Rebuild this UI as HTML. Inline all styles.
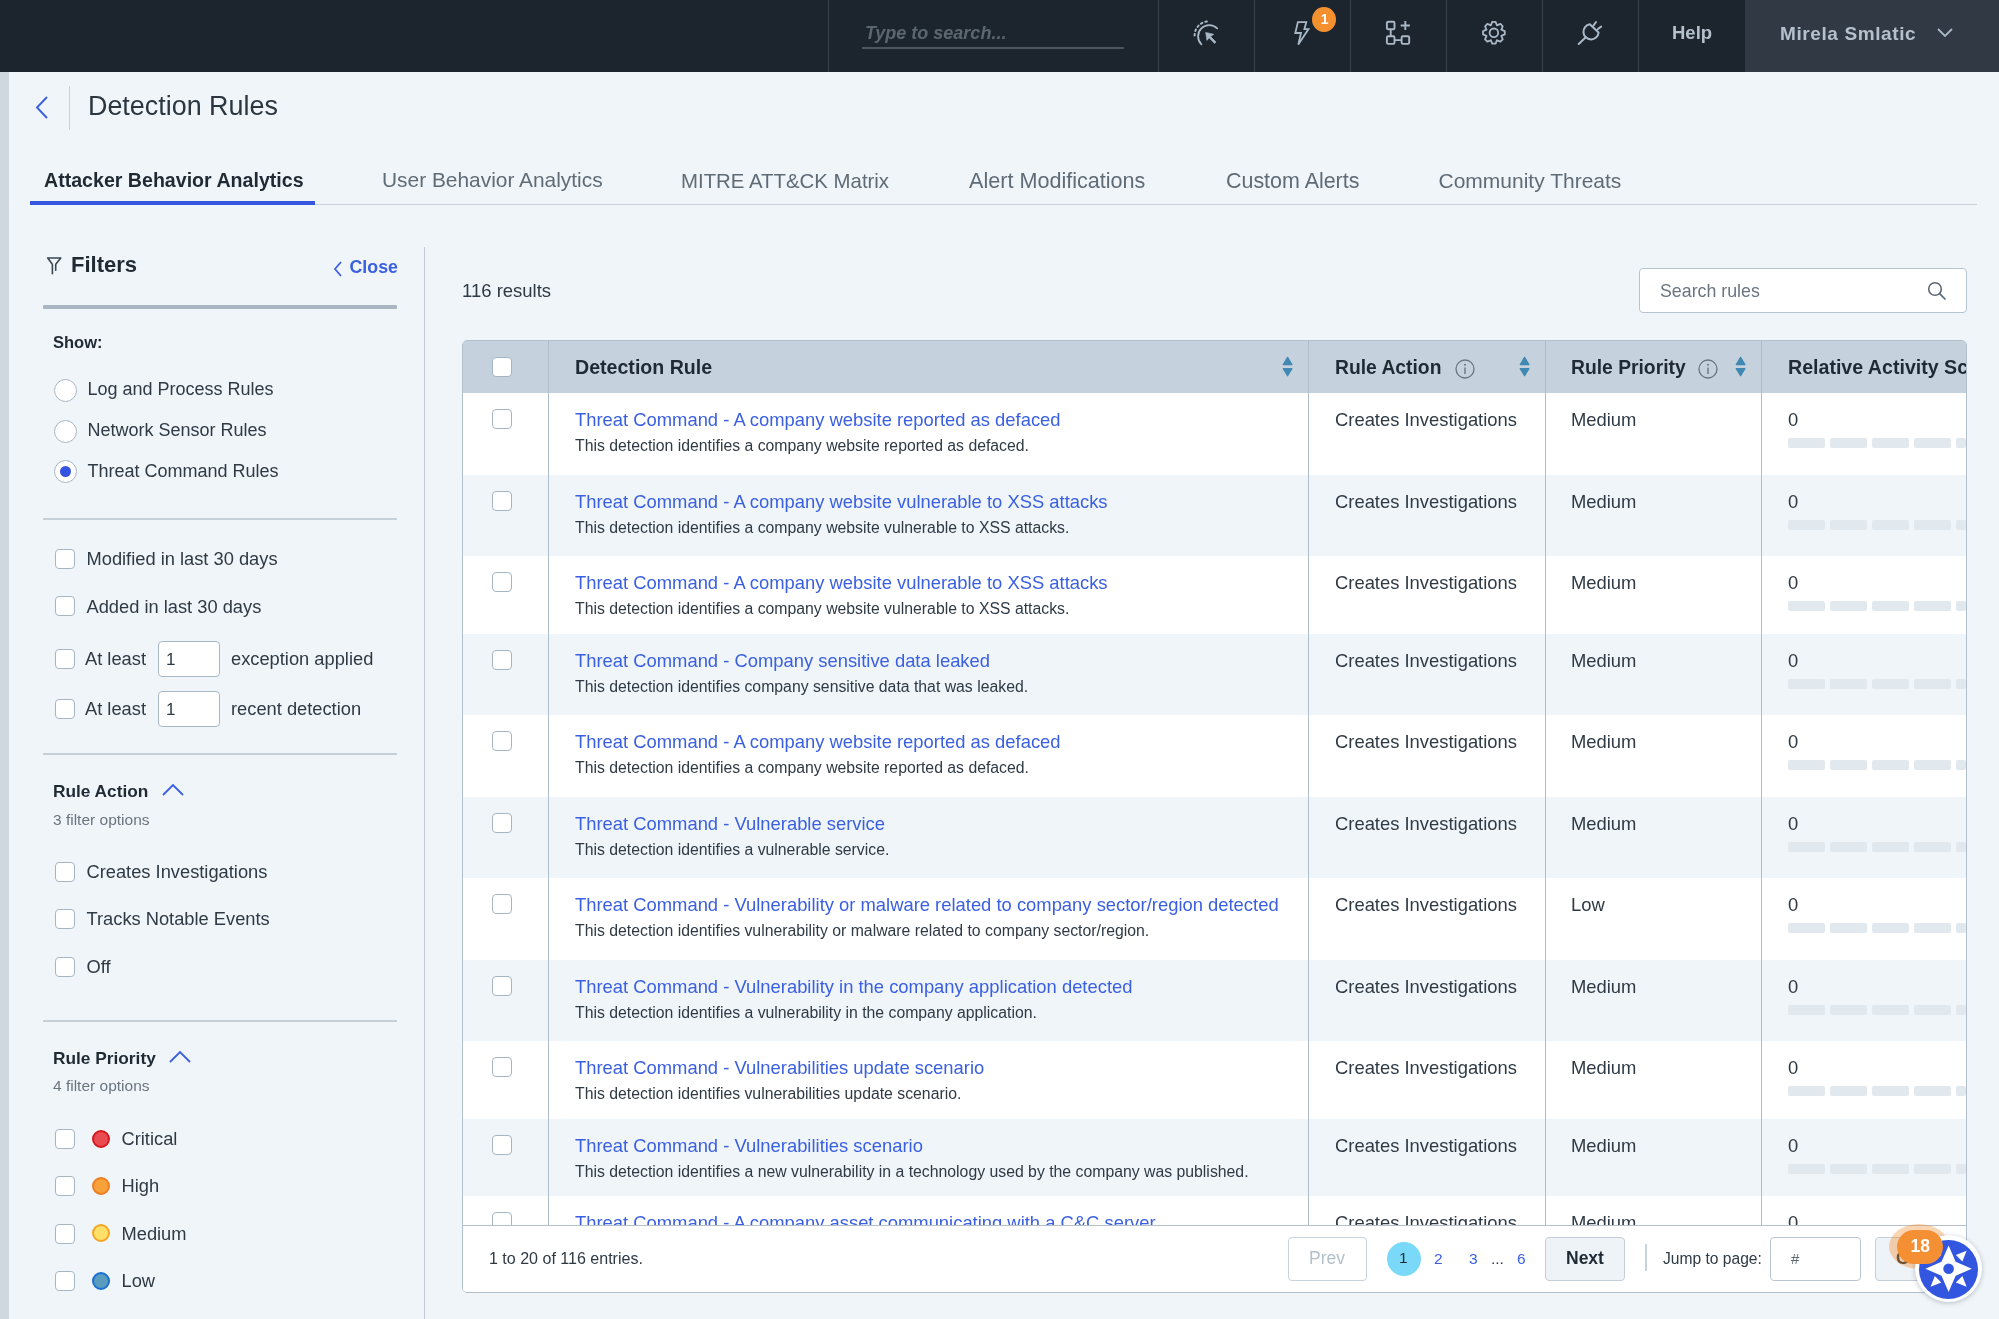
<!DOCTYPE html>
<html><head><meta charset="utf-8"><style>
html,body{margin:0;padding:0;width:1999px;height:1319px;overflow:hidden;background:#f0f5f9;font-family:"Liberation Sans", sans-serif;position:relative}
.t{position:absolute;white-space:nowrap;line-height:1}
#root{position:absolute;left:0;top:0;width:1999px;height:1319px;will-change:transform}
</style></head><body><div id="root">
<div style="position:absolute;left:0px;top:0px;width:1999px;height:72px;background:#1c252e"></div>
<div style="position:absolute;left:828px;top:0px;width:1px;height:72px;background:#37414b"></div>
<div style="position:absolute;left:1158px;top:0px;width:1px;height:72px;background:#37414b"></div>
<div style="position:absolute;left:1254px;top:0px;width:1px;height:72px;background:#37414b"></div>
<div style="position:absolute;left:1350px;top:0px;width:1px;height:72px;background:#37414b"></div>
<div style="position:absolute;left:1446px;top:0px;width:1px;height:72px;background:#37414b"></div>
<div style="position:absolute;left:1542px;top:0px;width:1px;height:72px;background:#37414b"></div>
<div style="position:absolute;left:1638px;top:0px;width:1px;height:72px;background:#37414b"></div>
<div style="position:absolute;left:1745px;top:0px;width:254px;height:72px;background:#313a44"></div>
<div class="t" style="left:865px;top:24.26px;font-size:18px;color:#5b6670;font-weight:700;font-style:italic;">Type to search...</div>
<div style="position:absolute;left:862px;top:47px;width:262px;height:2px;background:#4a5560"></div>
<div class="t" style="left:1672px;top:24.14px;font-size:18.5px;color:#b4c0cc;font-weight:700;">Help</div>
<div class="t" style="left:1780px;top:23.72px;font-size:19px;color:#b4c0cc;font-weight:700;letter-spacing:0.6px;">Mirela Smlatic</div>
<svg style="position:absolute;left:1936px;top:27px" width="18" height="12" viewBox="0 0 18 12"><path d="M2 2 L9 9 L16 2" fill="none" stroke="#a9b8c6" stroke-width="1.8"/></svg><svg style="position:absolute;left:1185px;top:14px" width="40" height="36" viewBox="0 0 40 36">
<path d="M16.4 30.3 A10.6 10.6 0 1 1 32.2 14.4" fill="none" stroke="#a9b8c6" stroke-width="1.8" stroke-linecap="round"/>
<path d="M9.6 21.5 A14.2 14.2 0 0 1 23.8 7.3" fill="none" stroke="#a9b8c6" stroke-width="2" stroke-linecap="round" stroke-dasharray="1.6 3.05"/>
<path d="M20.7 18.4 L28.8 20.3 L25.6 22.6 L31 28 L29.6 29.4 L24.2 24 L21.9 26.4 Z" fill="#a9b8c6" stroke="#a9b8c6" stroke-width="0.6" stroke-linejoin="round"/>
</svg><svg style="position:absolute;left:1285px;top:14px" width="30" height="36" viewBox="1285 14 30 36">
<path d="M1297.9 22.1 L1306.3 22.1 L1304.4 29.1 L1308.5 29.1 L1298.3 44.6 L1301 33 L1295.3 33 Z" fill="none" stroke="#a9b8c6" stroke-width="1.8" stroke-linejoin="miter"/>
</svg><div style="position:absolute;left:1312.3px;top:6.6px;width:24px;height:25.7px;background:#f5902f;border-radius:50%"></div>
<div class="t" style="left:1320.8px;top:12.35px;font-size:14px;color:#ffffff;font-weight:700;">1</div>
<svg style="position:absolute;left:1378px;top:14px" width="40" height="36" viewBox="0 0 40 36">
<rect x="8.9" y="7.7" width="7.6" height="7.6" rx="1.3" fill="none" stroke="#a9b8c6" stroke-width="1.9"/>
<rect x="8.9" y="22.3" width="7.6" height="7.6" rx="1.3" fill="none" stroke="#a9b8c6" stroke-width="1.9"/>
<rect x="23.6" y="22.3" width="7.6" height="7.6" rx="1.3" fill="none" stroke="#a9b8c6" stroke-width="1.9"/>
<path d="M12.7 15.3 V22.3 M16.5 26.1 H23.6 M27.3 7 V16.1 M22.7 11.5 H31.9" fill="none" stroke="#a9b8c6" stroke-width="1.9"/>
</svg><svg style="position:absolute;left:1474px;top:14px" width="40" height="36" viewBox="0 0 40 36">
<path d="M18.26 7.92 L21.54 7.92 L23.02 11.43 L22.91 11.39 L26.43 9.95 L28.75 12.27 L27.31 15.79 L27.27 15.68 L30.78 17.16 L30.78 20.44 L27.27 21.92 L27.31 21.81 L28.75 25.33 L26.43 27.65 L22.91 26.21 L23.02 26.17 L21.54 29.68 L18.26 29.68 L16.78 26.17 L16.89 26.21 L13.37 27.65 L11.05 25.33 L12.49 21.81 L12.53 21.92 L9.02 20.44 L9.02 17.16 L12.53 15.68 L12.49 15.79 L11.05 12.27 L13.37 9.95 L16.89 11.39 L16.78 11.43 Z" fill="none" stroke="#a9b8c6" stroke-width="1.8" stroke-linejoin="round"/>
<circle cx="19.9" cy="18.8" r="4.3" fill="none" stroke="#a9b8c6" stroke-width="1.8"/>
</svg><svg style="position:absolute;left:1570px;top:14px" width="40" height="36" viewBox="0 0 40 36">
<path d="M8.7 30 L15.8 23.2" fill="none" stroke="#a9b8c6" stroke-width="2" stroke-linecap="round"/>
<path d="M19.8 10.3 A7.6 7.6 0 1 0 28.6 18.6 Z" fill="none" stroke="#a9b8c6" stroke-width="2" stroke-linejoin="round"/>
<path d="M23.4 11.6 L26 8 M27.6 15.3 L31.1 12.6" fill="none" stroke="#a9b8c6" stroke-width="2" stroke-linecap="round"/>
</svg><div style="position:absolute;left:0px;top:72px;width:9px;height:1247px;background:#d0d8df"></div>
<svg style="position:absolute;left:34px;top:95px" width="16" height="26" viewBox="0 0 16 26"><path d="M13 2 L3 12.5 L13 23" fill="none" stroke="#3a5fe0" stroke-width="1.9"/></svg><div style="position:absolute;left:68.5px;top:86px;width:1px;height:44px;background:#c9d2da"></div>
<div class="t" style="left:88px;top:93.03px;font-size:26.9px;color:#2b3640;font-weight:400;">Detection Rules</div>
<div class="t" style="left:44px;top:171.41px;font-size:19.6px;color:#1f2a34;font-weight:700;">Attacker Behavior Analytics</div>
<div class="t" style="left:382px;top:170.31px;font-size:20.9px;color:#5f6b76;font-weight:400;">User Behavior Analytics</div>
<div class="t" style="left:681px;top:170.73px;font-size:20.4px;color:#5f6b76;font-weight:400;">MITRE ATT&amp;CK Matrix</div>
<div class="t" style="left:969px;top:169.72px;font-size:21.6px;color:#5f6b76;font-weight:400;">Alert Modifications</div>
<div class="t" style="left:1226px;top:170.84px;font-size:21.45px;color:#5f6b76;font-weight:400;">Custom Alerts</div>
<div class="t" style="left:1438.5px;top:170.22px;font-size:21.0px;color:#5f6b76;font-weight:400;">Community Threats</div>
<div style="position:absolute;left:30px;top:204px;width:1947px;height:1px;background:#c8d1da"></div>
<div style="position:absolute;left:30px;top:201px;width:285px;height:4px;background:#3557e0"></div>
<div style="position:absolute;left:424px;top:247px;width:1px;height:1072px;background:#c3ccd5"></div>
<svg style="position:absolute;left:40px;top:250px" width="30" height="30" viewBox="0 0 30 30"><path d="M12.4 23.7 V15 Q12.4 14.3 12 13.8 L7.7 8 H20.8 L16.1 13.8 Q15.7 14.3 15.7 15 V20.2" fill="none" stroke="#3a4652" stroke-width="1.6" stroke-linecap="round" stroke-linejoin="round"/></svg><div class="t" style="left:71px;top:254.38px;font-size:22px;color:#1f2a34;font-weight:700;">Filters</div>
<svg style="position:absolute;left:330.5px;top:258.5px" width="14" height="20" viewBox="0 0 14 20"><path d="M10 3 L4 10 L10 17" fill="none" stroke="#3a5fe0" stroke-width="1.7"/></svg><div class="t" style="left:349.5px;top:258.53px;font-size:17.8px;color:#3a5fe0;font-weight:700;">Close</div>
<div style="position:absolute;left:43px;top:305px;width:354px;height:4px;background:#a9b6c1;border-radius:1px"></div>
<div class="t" style="left:53px;top:334.03px;font-size:16.5px;color:#1f2a34;font-weight:700;">Show:</div>
<div style="position:absolute;left:54.0px;top:379.0px;width:23px;height:23px;box-sizing:border-box;border:1.3px solid #a7b5c2;border-radius:50%;background:#fff"></div>
<div class="t" style="left:87.5px;top:380.36px;font-size:18px;color:#2f3a45;font-weight:400;">Log and Process Rules</div>
<div style="position:absolute;left:54.0px;top:419.5px;width:23px;height:23px;box-sizing:border-box;border:1.3px solid #a7b5c2;border-radius:50%;background:#fff"></div>
<div class="t" style="left:87.5px;top:421.06px;font-size:18px;color:#2f3a45;font-weight:400;">Network Sensor Rules</div>
<div style="position:absolute;left:54.0px;top:460.0px;width:23px;height:23px;box-sizing:border-box;border:1.3px solid #a7b5c2;border-radius:50%;background:#fff"></div>
<div style="position:absolute;left:60.0px;top:466.0px;width:11px;height:11px;border-radius:50%;background:#3555e0"></div>
<div class="t" style="left:87.5px;top:461.66px;font-size:18px;color:#2f3a45;font-weight:400;">Threat Command Rules</div>
<div style="position:absolute;left:43px;top:518px;width:354px;height:1.5px;background:#c6d0d9"></div>
<div style="position:absolute;left:55px;top:549px;width:20px;height:20px;box-sizing:border-box;border:1.5px solid #a6b5c3;border-radius:4px;background:#fff"></div>
<div class="t" style="left:86.5px;top:550.11px;font-size:18.3px;color:#2f3a45;font-weight:400;">Modified in last 30 days</div>
<div style="position:absolute;left:55px;top:596px;width:20px;height:20px;box-sizing:border-box;border:1.5px solid #a6b5c3;border-radius:4px;background:#fff"></div>
<div class="t" style="left:86.5px;top:597.51px;font-size:18.3px;color:#2f3a45;font-weight:400;">Added in last 30 days</div>
<div style="position:absolute;left:55px;top:649px;width:20px;height:20px;box-sizing:border-box;border:1.5px solid #a6b5c3;border-radius:4px;background:#fff"></div>
<div class="t" style="left:85px;top:649.71px;font-size:18.3px;color:#2f3a45;font-weight:400;">At least</div>
<div style="position:absolute;left:158px;top:641px;width:62px;height:36px;box-sizing:border-box;border:1.3px solid #a9b7c4;border-radius:4px;background:#fff"></div>
<div class="t" style="left:166px;top:650.81px;font-size:17px;color:#2f3a45;font-weight:400;">1</div>
<div class="t" style="left:231px;top:649.71px;font-size:18.3px;color:#2f3a45;font-weight:400;">exception applied</div>
<div style="position:absolute;left:55px;top:699px;width:20px;height:20px;box-sizing:border-box;border:1.5px solid #a6b5c3;border-radius:4px;background:#fff"></div>
<div class="t" style="left:85px;top:699.51px;font-size:18.3px;color:#2f3a45;font-weight:400;">At least</div>
<div style="position:absolute;left:158px;top:691px;width:62px;height:36px;box-sizing:border-box;border:1.3px solid #a9b7c4;border-radius:4px;background:#fff"></div>
<div class="t" style="left:166px;top:700.61px;font-size:17px;color:#2f3a45;font-weight:400;">1</div>
<div class="t" style="left:231px;top:699.51px;font-size:18.3px;color:#2f3a45;font-weight:400;">recent detection</div>
<div style="position:absolute;left:43px;top:753px;width:354px;height:1.5px;background:#c6d0d9"></div>
<div class="t" style="left:53px;top:782.76px;font-size:17.3px;color:#1f2a34;font-weight:700;">Rule Action</div>
<svg style="position:absolute;left:161px;top:783px" width="24" height="14" viewBox="0 0 24 14"><path d="M2 12 L12 2 L22 12" fill="none" stroke="#3a5fe0" stroke-width="1.8"/></svg><div class="t" style="left:53px;top:811.88px;font-size:15.5px;color:#6b7580;font-weight:400;">3 filter options</div>
<div style="position:absolute;left:55px;top:862px;width:20px;height:20px;box-sizing:border-box;border:1.5px solid #a6b5c3;border-radius:4px;background:#fff"></div>
<div class="t" style="left:86.5px;top:862.81px;font-size:18.3px;color:#2f3a45;font-weight:400;">Creates Investigations</div>
<div style="position:absolute;left:55px;top:909px;width:20px;height:20px;box-sizing:border-box;border:1.5px solid #a6b5c3;border-radius:4px;background:#fff"></div>
<div class="t" style="left:86.5px;top:910.31px;font-size:18.3px;color:#2f3a45;font-weight:400;">Tracks Notable Events</div>
<div style="position:absolute;left:55px;top:957px;width:20px;height:20px;box-sizing:border-box;border:1.5px solid #a6b5c3;border-radius:4px;background:#fff"></div>
<div class="t" style="left:86.5px;top:957.81px;font-size:18.3px;color:#2f3a45;font-weight:400;">Off</div>
<div style="position:absolute;left:43px;top:1020px;width:354px;height:1.5px;background:#c6d0d9"></div>
<div class="t" style="left:53px;top:1049.76px;font-size:17.3px;color:#1f2a34;font-weight:700;">Rule Priority</div>
<svg style="position:absolute;left:168px;top:1050px" width="24" height="14" viewBox="0 0 24 14"><path d="M2 12 L12 2 L22 12" fill="none" stroke="#3a5fe0" stroke-width="1.8"/></svg><div class="t" style="left:53px;top:1078.38px;font-size:15.5px;color:#6b7580;font-weight:400;">4 filter options</div>
<div style="position:absolute;left:55px;top:1129px;width:20px;height:20px;box-sizing:border-box;border:1.5px solid #a6b5c3;border-radius:4px;background:#fff"></div>
<div style="position:absolute;left:92px;top:1129.5px;width:18px;height:18px;box-sizing:border-box;border:2.2px solid #d4181e;border-radius:50%;background:#e84c50"></div>
<div class="t" style="left:121.5px;top:1129.71px;font-size:18.3px;color:#2f3a45;font-weight:400;">Critical</div>
<div style="position:absolute;left:55px;top:1176px;width:20px;height:20px;box-sizing:border-box;border:1.5px solid #a6b5c3;border-radius:4px;background:#fff"></div>
<div style="position:absolute;left:92px;top:1176.5px;width:18px;height:18px;box-sizing:border-box;border:2.2px solid #ef7d22;border-radius:50%;background:#f7a13a"></div>
<div class="t" style="left:121.5px;top:1177.11px;font-size:18.3px;color:#2f3a45;font-weight:400;">High</div>
<div style="position:absolute;left:55px;top:1223.5px;width:20px;height:20px;box-sizing:border-box;border:1.5px solid #a6b5c3;border-radius:4px;background:#fff"></div>
<div style="position:absolute;left:92px;top:1224.0px;width:18px;height:18px;box-sizing:border-box;border:2.2px solid #f5a524;border-radius:50%;background:#fde06a"></div>
<div class="t" style="left:121.5px;top:1224.91px;font-size:18.3px;color:#2f3a45;font-weight:400;">Medium</div>
<div style="position:absolute;left:55px;top:1271px;width:20px;height:20px;box-sizing:border-box;border:1.5px solid #a6b5c3;border-radius:4px;background:#fff"></div>
<div style="position:absolute;left:92px;top:1271.5px;width:18px;height:18px;box-sizing:border-box;border:2.2px solid #1b6fd0;border-radius:50%;background:#5a9bc0"></div>
<div class="t" style="left:121.5px;top:1271.81px;font-size:18.3px;color:#2f3a45;font-weight:400;">Low</div>
<div class="t" style="left:462px;top:281.84px;font-size:18.5px;color:#2f3a45;font-weight:400;">116 results</div>
<div style="position:absolute;left:1639px;top:268px;width:328px;height:45px;box-sizing:border-box;border:1.6px solid #b6c4d0;border-radius:4px;background:#fff"></div>
<div class="t" style="left:1660px;top:282.93px;font-size:17.8px;color:#6b7580;font-weight:400;">Search rules</div>
<svg style="position:absolute;left:1926px;top:280px" width="22" height="22" viewBox="0 0 22 22"><circle cx="9" cy="9" r="6.3" fill="none" stroke="#5d6873" stroke-width="1.6"/><path d="M13.6 13.6 L19.5 19.5" stroke="#5d6873" stroke-width="1.7"/></svg><div style="position:absolute;left:462px;top:340px;width:1505px;height:953px;box-sizing:border-box;border:1.3px solid #b3c0cc;border-radius:5px;background:#fff;overflow:hidden"></div>
<div style="position:absolute;left:463px;top:341px;width:1503px;height:52px;background:#c5d1dc;border-radius:4px 4px 0 0"></div>
<div style="position:absolute;left:463px;top:393px;width:1503px;height:82px;background:#ffffff"></div>
<div style="position:absolute;left:463px;top:475px;width:1503px;height:81px;background:#eff5f9"></div>
<div style="position:absolute;left:463px;top:556px;width:1503px;height:78px;background:#ffffff"></div>
<div style="position:absolute;left:463px;top:634px;width:1503px;height:81px;background:#eff5f9"></div>
<div style="position:absolute;left:463px;top:715px;width:1503px;height:82px;background:#ffffff"></div>
<div style="position:absolute;left:463px;top:797px;width:1503px;height:81px;background:#eff5f9"></div>
<div style="position:absolute;left:463px;top:878px;width:1503px;height:82px;background:#ffffff"></div>
<div style="position:absolute;left:463px;top:960px;width:1503px;height:81px;background:#eff5f9"></div>
<div style="position:absolute;left:463px;top:1041px;width:1503px;height:78px;background:#ffffff"></div>
<div style="position:absolute;left:463px;top:1119px;width:1503px;height:77px;background:#eff5f9"></div>
<div style="position:absolute;left:463px;top:1196px;width:1503px;height:29px;background:#ffffff"></div>
<div style="position:absolute;left:547.5px;top:340px;width:1px;height:885px;background:#aebdcb"></div>
<div style="position:absolute;left:1307.5px;top:340px;width:1px;height:885px;background:#aebdcb"></div>
<div style="position:absolute;left:1544.5px;top:340px;width:1px;height:885px;background:#aebdcb"></div>
<div style="position:absolute;left:1760.5px;top:340px;width:1px;height:885px;background:#aebdcb"></div>
<div style="position:absolute;left:492px;top:357px;width:20px;height:20px;box-sizing:border-box;border:1.5px solid #a6b5c3;border-radius:4px;background:#fff"></div>
<div class="t" style="left:575px;top:357.91px;font-size:19.6px;color:#1f2a34;font-weight:700;">Detection Rule</div>
<div class="t" style="left:1335px;top:358.16px;font-size:19.3px;color:#1f2a34;font-weight:700;">Rule Action</div>
<div class="t" style="left:1571px;top:358.16px;font-size:19.3px;color:#1f2a34;font-weight:700;">Rule Priority</div>
<div style="position:absolute;left:1788px;top:340px;width:178px;height:53px;overflow:hidden"><div class="t" style="left:0px;top:17.91px;font-size:19.6px;color:#1f2a34;font-weight:700;">Relative Activity Score</div>
</div><svg style="position:absolute;left:1281.5px;top:356px" width="12" height="22" viewBox="0 0 12 22"><path d="M5.6 1.4 L9.9 8.5 H1.3 Z M1.3 12.6 H9.9 L5.6 19.7 Z" fill="#4189b4" stroke="#4189b4" stroke-width="1.3" stroke-linejoin="round"/></svg><svg style="position:absolute;left:1518.5px;top:356px" width="12" height="22" viewBox="0 0 12 22"><path d="M5.6 1.4 L9.9 8.5 H1.3 Z M1.3 12.6 H9.9 L5.6 19.7 Z" fill="#4189b4" stroke="#4189b4" stroke-width="1.3" stroke-linejoin="round"/></svg><svg style="position:absolute;left:1734.5px;top:356px" width="12" height="22" viewBox="0 0 12 22"><path d="M5.6 1.4 L9.9 8.5 H1.3 Z M1.3 12.6 H9.9 L5.6 19.7 Z" fill="#4189b4" stroke="#4189b4" stroke-width="1.3" stroke-linejoin="round"/></svg><svg style="position:absolute;left:1454.5px;top:359px" width="20" height="20" viewBox="0 0 20 20"><circle cx="10" cy="10" r="9" fill="none" stroke="#6b7681" stroke-width="1.3"/><circle cx="10" cy="5.8" r="1" fill="#6b7681"/><path d="M10 8.5 V15" stroke="#6b7681" stroke-width="1.4"/></svg><svg style="position:absolute;left:1698px;top:359px" width="20" height="20" viewBox="0 0 20 20"><circle cx="10" cy="10" r="9" fill="none" stroke="#6b7681" stroke-width="1.3"/><circle cx="10" cy="5.8" r="1" fill="#6b7681"/><path d="M10 8.5 V15" stroke="#6b7681" stroke-width="1.4"/></svg><div style="position:absolute;left:0;top:0;width:1999px;height:1225px;overflow:hidden"><div style="position:absolute;left:492px;top:409px;width:20px;height:20px;box-sizing:border-box;border:1.5px solid #a6b5c3;border-radius:4px;background:#fff"></div>
<div class="t" style="left:575px;top:410.92px;font-size:18.4px;color:#3a5fe0;font-weight:400;">Threat Command - A company website reported as defaced</div>
<div class="t" style="left:575px;top:438.13px;font-size:15.8px;color:#2f3a45;font-weight:400;">This detection identifies a company website reported as defaced.</div>
<div class="t" style="left:1335px;top:410.92px;font-size:18.4px;color:#2f3a45;font-weight:400;">Creates Investigations</div>
<div class="t" style="left:1571px;top:410.92px;font-size:18.4px;color:#2f3a45;font-weight:400;">Medium</div>
<div class="t" style="left:1788px;top:410.92px;font-size:18.4px;color:#2f3a45;font-weight:400;">0</div>
<div style="position:absolute;left:1788px;top:438px;width:37px;height:10px;background:#e1e9ef;border-radius:2px"></div>
<div style="position:absolute;left:1830px;top:438px;width:37px;height:10px;background:#e1e9ef;border-radius:2px"></div>
<div style="position:absolute;left:1872px;top:438px;width:37px;height:10px;background:#e1e9ef;border-radius:2px"></div>
<div style="position:absolute;left:1914px;top:438px;width:37px;height:10px;background:#e1e9ef;border-radius:2px"></div>
<div style="position:absolute;left:1956px;top:438px;width:10px;height:10px;background:#e1e9ef;border-radius:2px"></div>
<div style="position:absolute;left:492px;top:491px;width:20px;height:20px;box-sizing:border-box;border:1.5px solid #a6b5c3;border-radius:4px;background:#fff"></div>
<div class="t" style="left:575px;top:492.92px;font-size:18.4px;color:#3a5fe0;font-weight:400;">Threat Command - A company website vulnerable to XSS attacks</div>
<div class="t" style="left:575px;top:520.13px;font-size:15.8px;color:#2f3a45;font-weight:400;">This detection identifies a company website vulnerable to XSS attacks.</div>
<div class="t" style="left:1335px;top:492.92px;font-size:18.4px;color:#2f3a45;font-weight:400;">Creates Investigations</div>
<div class="t" style="left:1571px;top:492.92px;font-size:18.4px;color:#2f3a45;font-weight:400;">Medium</div>
<div class="t" style="left:1788px;top:492.92px;font-size:18.4px;color:#2f3a45;font-weight:400;">0</div>
<div style="position:absolute;left:1788px;top:520px;width:37px;height:10px;background:#e1e9ef;border-radius:2px"></div>
<div style="position:absolute;left:1830px;top:520px;width:37px;height:10px;background:#e1e9ef;border-radius:2px"></div>
<div style="position:absolute;left:1872px;top:520px;width:37px;height:10px;background:#e1e9ef;border-radius:2px"></div>
<div style="position:absolute;left:1914px;top:520px;width:37px;height:10px;background:#e1e9ef;border-radius:2px"></div>
<div style="position:absolute;left:1956px;top:520px;width:10px;height:10px;background:#e1e9ef;border-radius:2px"></div>
<div style="position:absolute;left:492px;top:572px;width:20px;height:20px;box-sizing:border-box;border:1.5px solid #a6b5c3;border-radius:4px;background:#fff"></div>
<div class="t" style="left:575px;top:573.92px;font-size:18.4px;color:#3a5fe0;font-weight:400;">Threat Command - A company website vulnerable to XSS attacks</div>
<div class="t" style="left:575px;top:601.13px;font-size:15.8px;color:#2f3a45;font-weight:400;">This detection identifies a company website vulnerable to XSS attacks.</div>
<div class="t" style="left:1335px;top:573.92px;font-size:18.4px;color:#2f3a45;font-weight:400;">Creates Investigations</div>
<div class="t" style="left:1571px;top:573.92px;font-size:18.4px;color:#2f3a45;font-weight:400;">Medium</div>
<div class="t" style="left:1788px;top:573.92px;font-size:18.4px;color:#2f3a45;font-weight:400;">0</div>
<div style="position:absolute;left:1788px;top:601px;width:37px;height:10px;background:#e1e9ef;border-radius:2px"></div>
<div style="position:absolute;left:1830px;top:601px;width:37px;height:10px;background:#e1e9ef;border-radius:2px"></div>
<div style="position:absolute;left:1872px;top:601px;width:37px;height:10px;background:#e1e9ef;border-radius:2px"></div>
<div style="position:absolute;left:1914px;top:601px;width:37px;height:10px;background:#e1e9ef;border-radius:2px"></div>
<div style="position:absolute;left:1956px;top:601px;width:10px;height:10px;background:#e1e9ef;border-radius:2px"></div>
<div style="position:absolute;left:492px;top:650px;width:20px;height:20px;box-sizing:border-box;border:1.5px solid #a6b5c3;border-radius:4px;background:#fff"></div>
<div class="t" style="left:575px;top:651.92px;font-size:18.4px;color:#3a5fe0;font-weight:400;">Threat Command - Company sensitive data leaked</div>
<div class="t" style="left:575px;top:679.13px;font-size:15.8px;color:#2f3a45;font-weight:400;">This detection identifies company sensitive data that was leaked.</div>
<div class="t" style="left:1335px;top:651.92px;font-size:18.4px;color:#2f3a45;font-weight:400;">Creates Investigations</div>
<div class="t" style="left:1571px;top:651.92px;font-size:18.4px;color:#2f3a45;font-weight:400;">Medium</div>
<div class="t" style="left:1788px;top:651.92px;font-size:18.4px;color:#2f3a45;font-weight:400;">0</div>
<div style="position:absolute;left:1788px;top:679px;width:37px;height:10px;background:#e1e9ef;border-radius:2px"></div>
<div style="position:absolute;left:1830px;top:679px;width:37px;height:10px;background:#e1e9ef;border-radius:2px"></div>
<div style="position:absolute;left:1872px;top:679px;width:37px;height:10px;background:#e1e9ef;border-radius:2px"></div>
<div style="position:absolute;left:1914px;top:679px;width:37px;height:10px;background:#e1e9ef;border-radius:2px"></div>
<div style="position:absolute;left:1956px;top:679px;width:10px;height:10px;background:#e1e9ef;border-radius:2px"></div>
<div style="position:absolute;left:492px;top:731px;width:20px;height:20px;box-sizing:border-box;border:1.5px solid #a6b5c3;border-radius:4px;background:#fff"></div>
<div class="t" style="left:575px;top:732.92px;font-size:18.4px;color:#3a5fe0;font-weight:400;">Threat Command - A company website reported as defaced</div>
<div class="t" style="left:575px;top:760.13px;font-size:15.8px;color:#2f3a45;font-weight:400;">This detection identifies a company website reported as defaced.</div>
<div class="t" style="left:1335px;top:732.92px;font-size:18.4px;color:#2f3a45;font-weight:400;">Creates Investigations</div>
<div class="t" style="left:1571px;top:732.92px;font-size:18.4px;color:#2f3a45;font-weight:400;">Medium</div>
<div class="t" style="left:1788px;top:732.92px;font-size:18.4px;color:#2f3a45;font-weight:400;">0</div>
<div style="position:absolute;left:1788px;top:760px;width:37px;height:10px;background:#e1e9ef;border-radius:2px"></div>
<div style="position:absolute;left:1830px;top:760px;width:37px;height:10px;background:#e1e9ef;border-radius:2px"></div>
<div style="position:absolute;left:1872px;top:760px;width:37px;height:10px;background:#e1e9ef;border-radius:2px"></div>
<div style="position:absolute;left:1914px;top:760px;width:37px;height:10px;background:#e1e9ef;border-radius:2px"></div>
<div style="position:absolute;left:1956px;top:760px;width:10px;height:10px;background:#e1e9ef;border-radius:2px"></div>
<div style="position:absolute;left:492px;top:813px;width:20px;height:20px;box-sizing:border-box;border:1.5px solid #a6b5c3;border-radius:4px;background:#fff"></div>
<div class="t" style="left:575px;top:814.92px;font-size:18.4px;color:#3a5fe0;font-weight:400;">Threat Command - Vulnerable service</div>
<div class="t" style="left:575px;top:842.13px;font-size:15.8px;color:#2f3a45;font-weight:400;">This detection identifies a vulnerable service.</div>
<div class="t" style="left:1335px;top:814.92px;font-size:18.4px;color:#2f3a45;font-weight:400;">Creates Investigations</div>
<div class="t" style="left:1571px;top:814.92px;font-size:18.4px;color:#2f3a45;font-weight:400;">Medium</div>
<div class="t" style="left:1788px;top:814.92px;font-size:18.4px;color:#2f3a45;font-weight:400;">0</div>
<div style="position:absolute;left:1788px;top:842px;width:37px;height:10px;background:#e1e9ef;border-radius:2px"></div>
<div style="position:absolute;left:1830px;top:842px;width:37px;height:10px;background:#e1e9ef;border-radius:2px"></div>
<div style="position:absolute;left:1872px;top:842px;width:37px;height:10px;background:#e1e9ef;border-radius:2px"></div>
<div style="position:absolute;left:1914px;top:842px;width:37px;height:10px;background:#e1e9ef;border-radius:2px"></div>
<div style="position:absolute;left:1956px;top:842px;width:10px;height:10px;background:#e1e9ef;border-radius:2px"></div>
<div style="position:absolute;left:492px;top:894px;width:20px;height:20px;box-sizing:border-box;border:1.5px solid #a6b5c3;border-radius:4px;background:#fff"></div>
<div class="t" style="left:575px;top:895.92px;font-size:18.4px;color:#3a5fe0;font-weight:400;">Threat Command - Vulnerability or malware related to company sector/region detected</div>
<div class="t" style="left:575px;top:923.13px;font-size:15.8px;color:#2f3a45;font-weight:400;">This detection identifies vulnerability or malware related to company sector/region.</div>
<div class="t" style="left:1335px;top:895.92px;font-size:18.4px;color:#2f3a45;font-weight:400;">Creates Investigations</div>
<div class="t" style="left:1571px;top:895.92px;font-size:18.4px;color:#2f3a45;font-weight:400;">Low</div>
<div class="t" style="left:1788px;top:895.92px;font-size:18.4px;color:#2f3a45;font-weight:400;">0</div>
<div style="position:absolute;left:1788px;top:923px;width:37px;height:10px;background:#e1e9ef;border-radius:2px"></div>
<div style="position:absolute;left:1830px;top:923px;width:37px;height:10px;background:#e1e9ef;border-radius:2px"></div>
<div style="position:absolute;left:1872px;top:923px;width:37px;height:10px;background:#e1e9ef;border-radius:2px"></div>
<div style="position:absolute;left:1914px;top:923px;width:37px;height:10px;background:#e1e9ef;border-radius:2px"></div>
<div style="position:absolute;left:1956px;top:923px;width:10px;height:10px;background:#e1e9ef;border-radius:2px"></div>
<div style="position:absolute;left:492px;top:976px;width:20px;height:20px;box-sizing:border-box;border:1.5px solid #a6b5c3;border-radius:4px;background:#fff"></div>
<div class="t" style="left:575px;top:977.92px;font-size:18.4px;color:#3a5fe0;font-weight:400;">Threat Command - Vulnerability in the company application detected</div>
<div class="t" style="left:575px;top:1005.13px;font-size:15.8px;color:#2f3a45;font-weight:400;">This detection identifies a vulnerability in the company application.</div>
<div class="t" style="left:1335px;top:977.92px;font-size:18.4px;color:#2f3a45;font-weight:400;">Creates Investigations</div>
<div class="t" style="left:1571px;top:977.92px;font-size:18.4px;color:#2f3a45;font-weight:400;">Medium</div>
<div class="t" style="left:1788px;top:977.92px;font-size:18.4px;color:#2f3a45;font-weight:400;">0</div>
<div style="position:absolute;left:1788px;top:1005px;width:37px;height:10px;background:#e1e9ef;border-radius:2px"></div>
<div style="position:absolute;left:1830px;top:1005px;width:37px;height:10px;background:#e1e9ef;border-radius:2px"></div>
<div style="position:absolute;left:1872px;top:1005px;width:37px;height:10px;background:#e1e9ef;border-radius:2px"></div>
<div style="position:absolute;left:1914px;top:1005px;width:37px;height:10px;background:#e1e9ef;border-radius:2px"></div>
<div style="position:absolute;left:1956px;top:1005px;width:10px;height:10px;background:#e1e9ef;border-radius:2px"></div>
<div style="position:absolute;left:492px;top:1057px;width:20px;height:20px;box-sizing:border-box;border:1.5px solid #a6b5c3;border-radius:4px;background:#fff"></div>
<div class="t" style="left:575px;top:1058.92px;font-size:18.4px;color:#3a5fe0;font-weight:400;">Threat Command - Vulnerabilities update scenario</div>
<div class="t" style="left:575px;top:1086.13px;font-size:15.8px;color:#2f3a45;font-weight:400;">This detection identifies vulnerabilities update scenario.</div>
<div class="t" style="left:1335px;top:1058.92px;font-size:18.4px;color:#2f3a45;font-weight:400;">Creates Investigations</div>
<div class="t" style="left:1571px;top:1058.92px;font-size:18.4px;color:#2f3a45;font-weight:400;">Medium</div>
<div class="t" style="left:1788px;top:1058.92px;font-size:18.4px;color:#2f3a45;font-weight:400;">0</div>
<div style="position:absolute;left:1788px;top:1086px;width:37px;height:10px;background:#e1e9ef;border-radius:2px"></div>
<div style="position:absolute;left:1830px;top:1086px;width:37px;height:10px;background:#e1e9ef;border-radius:2px"></div>
<div style="position:absolute;left:1872px;top:1086px;width:37px;height:10px;background:#e1e9ef;border-radius:2px"></div>
<div style="position:absolute;left:1914px;top:1086px;width:37px;height:10px;background:#e1e9ef;border-radius:2px"></div>
<div style="position:absolute;left:1956px;top:1086px;width:10px;height:10px;background:#e1e9ef;border-radius:2px"></div>
<div style="position:absolute;left:492px;top:1135px;width:20px;height:20px;box-sizing:border-box;border:1.5px solid #a6b5c3;border-radius:4px;background:#fff"></div>
<div class="t" style="left:575px;top:1136.92px;font-size:18.4px;color:#3a5fe0;font-weight:400;">Threat Command - Vulnerabilities scenario</div>
<div class="t" style="left:575px;top:1164.13px;font-size:15.8px;color:#2f3a45;font-weight:400;">This detection identifies a new vulnerability in a technology used by the company was published.</div>
<div class="t" style="left:1335px;top:1136.92px;font-size:18.4px;color:#2f3a45;font-weight:400;">Creates Investigations</div>
<div class="t" style="left:1571px;top:1136.92px;font-size:18.4px;color:#2f3a45;font-weight:400;">Medium</div>
<div class="t" style="left:1788px;top:1136.92px;font-size:18.4px;color:#2f3a45;font-weight:400;">0</div>
<div style="position:absolute;left:1788px;top:1164px;width:37px;height:10px;background:#e1e9ef;border-radius:2px"></div>
<div style="position:absolute;left:1830px;top:1164px;width:37px;height:10px;background:#e1e9ef;border-radius:2px"></div>
<div style="position:absolute;left:1872px;top:1164px;width:37px;height:10px;background:#e1e9ef;border-radius:2px"></div>
<div style="position:absolute;left:1914px;top:1164px;width:37px;height:10px;background:#e1e9ef;border-radius:2px"></div>
<div style="position:absolute;left:1956px;top:1164px;width:10px;height:10px;background:#e1e9ef;border-radius:2px"></div>
<div style="position:absolute;left:492px;top:1212px;width:20px;height:20px;box-sizing:border-box;border:1.5px solid #a6b5c3;border-radius:4px;background:#fff"></div>
<div class="t" style="left:575px;top:1213.92px;font-size:18.4px;color:#3a5fe0;font-weight:400;">Threat Command - A company asset communicating with a C&amp;C server</div>
<div class="t" style="left:1335px;top:1213.92px;font-size:18.4px;color:#2f3a45;font-weight:400;">Creates Investigations</div>
<div class="t" style="left:1571px;top:1213.92px;font-size:18.4px;color:#2f3a45;font-weight:400;">Medium</div>
<div class="t" style="left:1788px;top:1213.92px;font-size:18.4px;color:#2f3a45;font-weight:400;">0</div>
<div style="position:absolute;left:1788px;top:1241px;width:37px;height:10px;background:#e1e9ef;border-radius:2px"></div>
<div style="position:absolute;left:1830px;top:1241px;width:37px;height:10px;background:#e1e9ef;border-radius:2px"></div>
<div style="position:absolute;left:1872px;top:1241px;width:37px;height:10px;background:#e1e9ef;border-radius:2px"></div>
<div style="position:absolute;left:1914px;top:1241px;width:37px;height:10px;background:#e1e9ef;border-radius:2px"></div>
<div style="position:absolute;left:1956px;top:1241px;width:10px;height:10px;background:#e1e9ef;border-radius:2px"></div>
</div><div style="position:absolute;left:463px;top:1225px;width:1503px;height:67px;background:#fff;border-radius:0 0 4px 4px"></div>
<div style="position:absolute;left:462px;top:1224.5px;width:1505px;height:1.3px;background:#b3c0cc"></div>
<div class="t" style="left:489px;top:1250.41px;font-size:16.05px;color:#2f3a45;font-weight:400;">1 to 20 of 116 entries.</div>
<div style="position:absolute;left:1287.5px;top:1237px;width:79px;height:44px;box-sizing:border-box;border:1.3px solid #c9d3dc;border-radius:4px;background:#fff"></div>
<div class="t" style="left:1309px;top:1250.19px;font-size:17.5px;color:#b3bfca;font-weight:400;">Prev</div>
<div style="position:absolute;left:1386.5px;top:1241.5px;width:34px;height:34px;border-radius:50%;background:#7ad8f8"></div>
<div class="t" style="left:1399px;top:1249.88px;font-size:15.5px;color:#1f2a34;font-weight:400;">1</div>
<div class="t" style="left:1434px;top:1250.88px;font-size:15.5px;color:#3a5fe0;font-weight:400;">2</div>
<div class="t" style="left:1469px;top:1250.88px;font-size:15.5px;color:#3a5fe0;font-weight:400;">3</div>
<div class="t" style="left:1491px;top:1250.88px;font-size:15.5px;color:#2b3640;font-weight:400;">...</div>
<div class="t" style="left:1517px;top:1250.88px;font-size:15.5px;color:#3a5fe0;font-weight:400;">6</div>
<div style="position:absolute;left:1545px;top:1237px;width:80px;height:44px;box-sizing:border-box;border:1.3px solid #c3ced8;border-radius:4px;background:#eef3f7"></div>
<div class="t" style="left:1566px;top:1250.19px;font-size:17.5px;color:#1f2a34;font-weight:700;">Next</div>
<div style="position:absolute;left:1645px;top:1244px;width:2px;height:27px;background:#c9d3dc"></div>
<div class="t" style="left:1663px;top:1250.79px;font-size:15.6px;color:#2f3a45;font-weight:400;">Jump to page:</div>
<div style="position:absolute;left:1769.5px;top:1237px;width:91px;height:44px;box-sizing:border-box;border:1.3px solid #b9c5d0;border-radius:4px;background:#fff"></div>
<div class="t" style="left:1791px;top:1251.30px;font-size:15px;color:#5d6873;font-weight:400;">#</div>
<div style="position:absolute;left:1875px;top:1237px;width:80px;height:44px;box-sizing:border-box;border:1.3px solid #c3ced8;border-radius:4px;background:#eef3f7"></div>
<div class="t" style="left:1896px;top:1250.19px;font-size:17.5px;color:#1f2a34;font-weight:700;">Go</div>
<div style="position:absolute;left:1888.5px;top:1224px;width:60px;height:45px;border-radius:50%;background:rgba(245,143,51,0.38)"></div>
<div style="position:absolute;left:1915px;top:1235.3px;width:67px;height:67px;border-radius:50%;background:#fff;box-shadow:0 1px 5px rgba(40,60,80,0.30)"></div>
<div style="position:absolute;left:1919.3px;top:1239.8px;width:59px;height:59px;border-radius:50%;background:#3356e0"></div>
<svg style="position:absolute;left:1914px;top:1235px" width="70" height="70" viewBox="0 0 70 70"><path d="M34.60 10.60 L41.67 26.73 L57.80 33.80 L41.67 40.87 L34.60 57.00 L27.53 40.87 L11.40 33.80 L27.53 26.73 Z" fill="#fff"/><path d="M52.63 15.77 L41.88 20.00 L48.40 26.52 Z M52.63 51.83 L48.40 41.08 L41.88 47.60 Z M16.57 51.83 L27.32 47.60 L20.80 41.08 Z M16.57 15.77 L20.80 26.52 L27.32 20.00 Z " fill="#fff"/><circle cx="34.60" cy="33.80" r="5.3" fill="#3356e0"/></svg><div style="position:absolute;left:1896.8px;top:1229.8px;width:46.5px;height:34px;border-radius:17px;background:#f58f33"></div>
<div class="t" style="left:1910.5px;top:1237.69px;font-size:17.5px;color:#ffffff;font-weight:700;">18</div>

</div></body></html>
